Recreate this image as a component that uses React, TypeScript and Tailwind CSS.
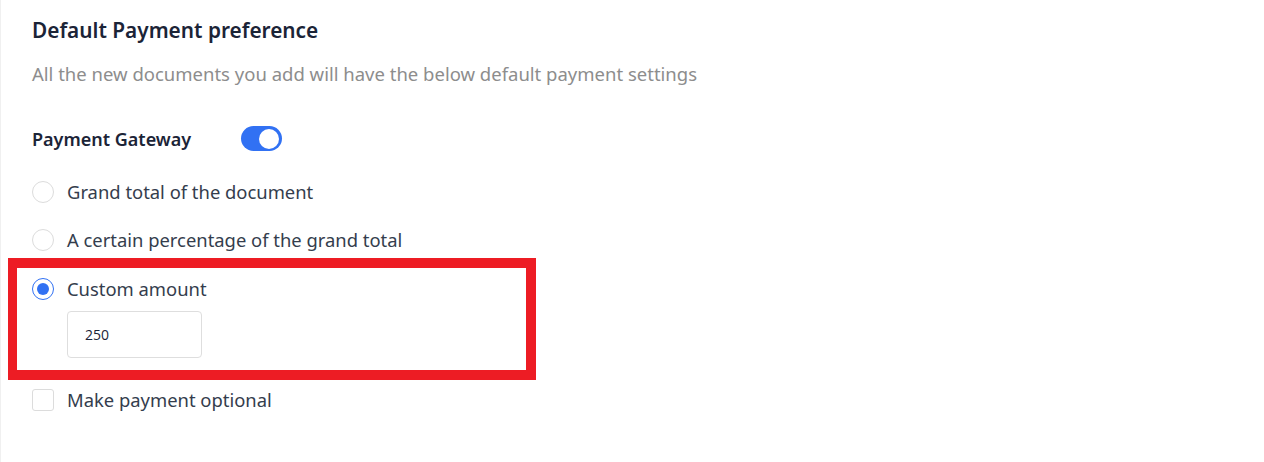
export default function App() {
  return (
    <div className="h-[462px] w-[1264px] border-l border-[#f0f0f0] bg-white pl-[31px] pt-4 font-['Noto_Sans',sans-serif] text-[#343d4d]">
      <h2 className="text-[20.8px] font-semibold leading-7 text-[#1b2437]">Default Payment preference</h2>
      <p className="mt-[18px] text-[18.5px] leading-6 text-[#8d8d8d]">
        All the new documents you add will have the below default payment settings
      </p>

      <div className="mt-[40px] flex items-center">
        <span className="w-[209px] text-[18px] font-semibold leading-6 text-[#1b2437]">Payment Gateway</span>
        <span className="relative h-[25px] w-[41px] rounded-full bg-[#3171f3]">
          <span className="absolute right-[3px] top-[2.5px] h-5 w-5 rounded-full bg-white" />
        </span>
      </div>

      <label className="mt-[29px] flex h-6 items-center gap-[13px]">
        <span className="h-[22px] w-[22px] rounded-full border border-[#dcdcdc]" />
        <span className="text-[18.4px] leading-6">Grand total of the document</span>
      </label>
      <label className="mt-6 flex h-6 items-center gap-[13px]">
        <span className="h-[22px] w-[22px] rounded-full border border-[#dcdcdc]" />
        <span className="text-[18.4px] leading-6">A certain percentage of the grand total</span>
      </label>

      <div className="relative">
        <div className="pointer-events-none absolute -left-6 -top-[19px] h-[122px] w-[528px] border-[10px] border-l-[9px] border-[#ed1c24]" />
        <label className="mt-[25px] flex h-6 items-center gap-[13px]">
          <span className="flex h-[22px] w-[22px] items-center justify-center rounded-full border border-[#3171f3]">
            <span className="h-3 w-3 rounded-full bg-[#3171f3]" />
          </span>
          <span className="text-[18.4px] leading-6">Custom amount</span>
        </label>
        <div className="ml-[35px] mt-[10px] flex h-[47px] w-[135px] items-center rounded border border-[#dedede] px-[17px] font-['Open_Sans',sans-serif] text-[14px] text-[#1b2437]">
          250
        </div>
      </div>

      <label className="mt-[30px] flex h-6 items-center gap-[13px]">
        <span className="h-[22px] w-[22px] rounded-[3px] border border-[#dcdcdc]" />
        <span className="text-[18.4px] leading-6">Make payment optional</span>
      </label>
    </div>
  );
}
